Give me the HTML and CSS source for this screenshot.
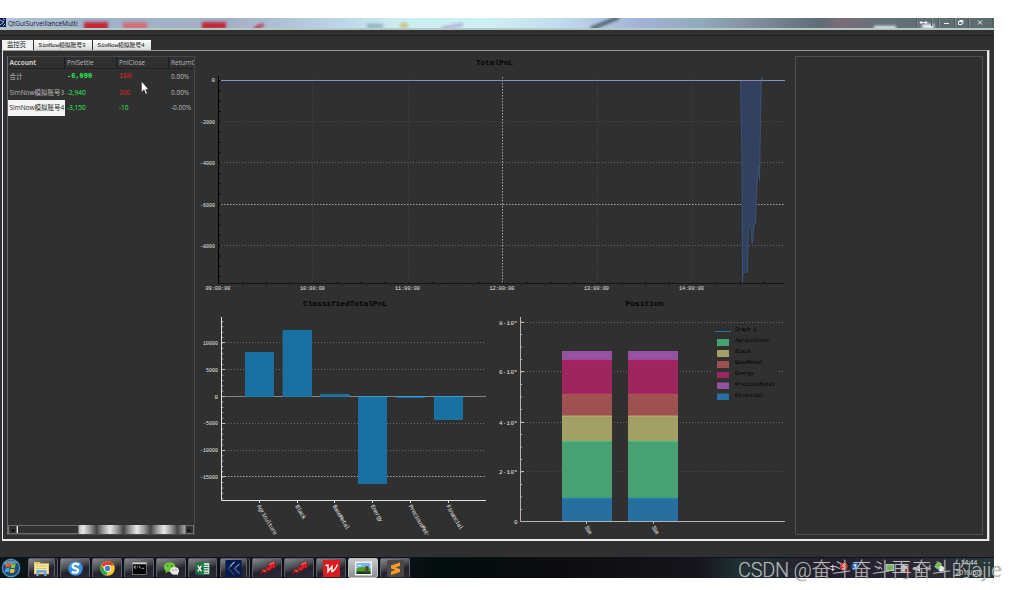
FILE: index.html
```
<!DOCTYPE html>
<html lang="zh">

<head>
  <meta charset="UTF-8" />
  <meta name="viewport" content="width=device-width, initial-scale=1.0" />
  <title>QtGuiSurveillanceMulti</title>
  <link rel="stylesheet" href="styles.css">
</head>

<body>
  <div class="desktop">
    <div class="titlebar">
      <svg class="app-icon" viewBox="0 0 6 9"><rect width="6" height="9" fill="#0b1f4d" /><path d="M0 2L4 4L0 7M3 1L5 2M3 8L5 6" stroke="#b9c7e8" stroke-width=".9" fill="none" /></svg>
      <span class="app-name">QtGuiSurveillanceMulti</span>
      <div class="glass">
        <i class="blob crimson b1"></i>
        <i class="blob crimson b2"></i>
        <i class="blob crimson b3"></i>
        <i class="blob crimson b4"></i>
        <i class="blob teal b5"></i>
        <i class="blob gold b6"></i>
        <i class="blob violet b7"></i>
        <i class="blob dark b8"></i>
        <i class="blob white b9"></i>
        <i class="blob white b10"></i>
      </div>
      <svg class="win-btns" viewBox="915 18 79 10">
        <path d="M916.5 18V26M931.5 18V26M938.5 18V27M954.5 18V27M968.5 18V27M992.5 18V27" stroke="#4b5759" />
        <path d="M917.5 18V26M932.5 18V26M939.5 18V27M955.5 18V27M969.5 18V27" stroke="#93a09f" stroke-width=".6" />
        <path d="M920 22.5H927M921.5 21L920 22.5L921.5 24M925.500 21L927 22.500L925.500 24M944 23.500H949" stroke="#f2f2f2" fill="none" />
        <path d="M958.500 21.500H962V24.500H958.500ZM959.500 20.500H963V23.500" stroke="#f2f2f2" fill="none" />
        <path d="M978 20.500L982 24.500M982 20.500L978 24.500" stroke="#f2f2f2" />
      </svg>
    </div>
    <div class="menubar"></div>

    <div class="tabs">
      <div class="tab active">监控页</div>
      <div class="tab">SimNow模拟账号3</div>
      <div class="tab">SimNow模拟账号4</div>
    </div>

    <div class="pane">
      <div class="accounts">
        <div class="row head">
          <div class="bold">Account</div>
          <div>PnlSettle</div>
          <div>PnlClose</div>
          <div>ReturnClose</div>
        </div>
        <div class="row">
          <div>合计</div>
          <div class="green mono">-6,090</div>
          <div class="red mono thin">190</div>
          <div>0.00%</div>
        </div>
        <div class="row">
          <div>SimNow模拟账号3</div>
          <div class="green">-2,940</div>
          <div class="red">200</div>
          <div>0.00%</div>
        </div>
        <div class="row">
          <div class="selected">SimNow模拟账号4</div>
          <div class="green">-3,150</div>
          <div class="green">-10</div>
          <div>-0.00%</div>
        </div>
        <div class="scrollbar">
          <span class="arrow">◂</span>
          <span class="trough"></span>
          <span class="handle"></span>
          <span class="arrow">▸</span>
        </div>
        <svg class="cursor" viewBox="0 0 8 14"><path d="M.5 .5V11L3 8.700L4.800 13L6.300 12.300L4.600 8.300H7.500Z" fill="#fff" stroke="#222" stroke-width=".4" /></svg>
      </div>

      <div class="charts">
        <!-- total pnl -->
        <svg class="total" viewBox="195 56 600 240">
          <text class="title" x="476" y="65" textLength="37">TotalPnL</text>
          <g class="grid">
            <path class="dim" d="M221 121.500H785M312.500 77V283M408.500 77V283M597.500 77V283M692.500 77V283" />
            <path class="mid" d="M221 245.500H785M221 162.500H785" />
            <path class="lit" d="M221 204.500H785M502.500 77V283" />
          </g>
          <path d="M740.500 80.500L742 160L742.500 282.500L743 273L744 272L746 273L747.500 271L748 245L748.500 226L749.500 225L751 230L752 243L753 240L753.500 225L755.500 224L756.500 195L757.500 174L758.500 166L759.500 180L760.500 120L761 97L761.500 80.500Z" fill="#33405f" />
          <path d="M740.500 80.500L742 160L742.500 282.500L743 273L744 272L746 273L747.500 271L748 245L748.500 226L749.500 225L751 230L752 243L753 240L753.500 225L755.500 224L756.500 195L757.500 174L758.500 166L759.500 180L760.500 120L761 97L761.500 77L762.500 80" fill="none" stroke="#3b5f88" stroke-width=".7" />
          <path d="M221 80.500H785" stroke="#7f97c0" />
          <path d="M741 80.500H762" stroke="#8e86ac" />
          <path d="M218.500 76V283.500" stroke="#000" />
          <path d="M219.500 80V283" stroke="#000" stroke-width="2" stroke-dasharray="1 9.320" />
          <path d="M218 283.500H785" stroke="#161616" />
          <path d="M218.500 282.500H785" stroke="#0b0b0b" stroke-width="1.500" stroke-dasharray="1 22.700" />
          <g class="tick end">
            <text x="215" y="82.300">0</text>
            <text x="215" y="123.500" textLength="15" lengthAdjust="spacingAndGlyphs">-2000</text>
            <text x="215" y="164.700" textLength="15" lengthAdjust="spacingAndGlyphs">-4000</text>
            <text x="215" y="206.500" textLength="15" lengthAdjust="spacingAndGlyphs">-6000</text>
            <text x="215" y="247.500" textLength="15" lengthAdjust="spacingAndGlyphs">-8000</text>
          </g>
          <g class="tick">
            <text x="205.500" y="290" textLength="25" lengthAdjust="spacingAndGlyphs">09:00:00</text>
            <text x="300" y="290" textLength="25" lengthAdjust="spacingAndGlyphs">10:00:00</text>
            <text x="395" y="290" textLength="25" lengthAdjust="spacingAndGlyphs">11:00:00</text>
            <text x="489.500" y="290" textLength="25" lengthAdjust="spacingAndGlyphs">12:00:00</text>
            <text x="584" y="290" textLength="25" lengthAdjust="spacingAndGlyphs">13:00:00</text>
            <text x="679" y="290" textLength="25" lengthAdjust="spacingAndGlyphs">14:00:00</text>
          </g>
        </svg>

        <!-- pnl by sector -->
        <svg class="classified" viewBox="195 296 300 239">
          <text class="title" x="303" y="306" textLength="84">ClassifiedTotalPnL</text>
          <g class="grid">
            <path class="mid" d="M225 342.500H486M225 369.500H486M225 423.500H486M225 450.500H486" />
            <path class="lit" d="M225 476.500H486" />
          </g>
          <path d="M221 396.500H486" stroke="#858585" />
          <g class="bars">
            <rect x="245.500" y="352.500" width="28" height="44" />
            <rect x="283" y="330.500" width="28.500" height="66" />
            <rect x="320.500" y="394.500" width="28.500" height="2" />
            <rect x="358.500" y="396.500" width="28" height="87" />
            <rect x="396.500" y="396.500" width="28" height="1" />
            <rect x="434.500" y="396.500" width="28" height="23" />
          </g>
          <path d="M358 396.500H387M396 396.500H425M434 396.500H463" stroke="#3b9dd4" />
          <path d="M222.500 321V500" stroke="#aaa" stroke-width="1.500" stroke-dasharray="1 4.370" />
          <path d="M221 342.500H225M221 369.500H225M221 396.500H225M221 423.500H225M221 450.500H225M221 476.500H225" stroke="#bbb" />
          <path d="M221.500 317V500.500H486M259.500 500V503M297.500 500V503M334.500 500V503M372.500 500V503M410.500 500V503M448.500 500V503" fill="none" stroke="#e2e2e2" />
          <g class="tick end">
            <text x="218" y="344.500" textLength="15" lengthAdjust="spacingAndGlyphs">10000</text>
            <text x="218" y="371.500" textLength="12" lengthAdjust="spacingAndGlyphs">5000</text>
            <text x="218" y="398.500">0</text>
            <text x="218" y="425" textLength="15" lengthAdjust="spacingAndGlyphs">-5000</text>
            <text x="218" y="452" textLength="18" lengthAdjust="spacingAndGlyphs">-10000</text>
            <text x="218" y="478.500" textLength="18" lengthAdjust="spacingAndGlyphs">-15000</text>
          </g>
          <g class="tick">
            <text transform="translate(257 506) rotate(60)" textLength="34">Agriculture</text>
            <text transform="translate(295 506) rotate(60)" textLength="16">Black</text>
            <text transform="translate(332.500 506) rotate(60)" textLength="28">BaseMetal</text>
            <text transform="translate(370.500 506) rotate(60)" textLength="19">Energy</text>
            <text transform="translate(408.500 506) rotate(60)" textLength="40">PreciousMetal</text>
            <text transform="translate(446 506) rotate(60)" textLength="28">Financial</text>
          </g>
        </svg>

        <!-- position value -->
        <svg class="position" viewBox="495 296 300 239">
          <text class="title" x="625.500" y="306" textLength="38">Position</text>
          <g class="grid">
            <path class="dim" d="M524 471.500H785" />
            <path class="mid" d="M524 322.500H785M524 371.500H711M779 371.500H785M524 422.500H785" />
          </g>
          <g class="stack">
            <path d="M562 351H612V360H562ZM628 351H678V360H628Z" fill="#9353a0" />
            <path d="M562 360H612V394H562ZM628 360H678V394H628Z" fill="#9e265c" />
            <path d="M562 394H612V416H562ZM628 394H678V416H628Z" fill="#9f5152" />
            <path d="M562 416H612V441H562ZM628 416H678V441H628Z" fill="#a3a065" />
            <path d="M562 441H612V498H562ZM628 441H678V498H628Z" fill="#48a173" />
            <path d="M562 498H612V521H562ZM628 498H678V521H628Z" fill="#266f9f" />
          </g>
          <g stroke-width=".8">
            <path d="M562 360.300H612M628 360.300H678" stroke="#c01a72" />
            <path d="M562 394.300H612M628 394.300H678" stroke="#b2545a" />
            <path d="M562 416H612M628 416H678" stroke="#bdb872" />
            <path d="M562 441.300H612M628 441.300H678" stroke="#4fc487" />
            <path d="M562 498.300H612M628 498.300H678" stroke="#2b89b8" />
          </g>
          <path d="M521.500 321.500V520" stroke="#aaa" stroke-width="1.500" stroke-dasharray="1 11.500" />
          <path d="M520 322.500H524M520 371.500H524M520 422.500H524M520 471.500H524" stroke="#bbb" />
          <path d="M520.500 317V521.500H785M586.500 521V524M653.500 521V524" fill="none" stroke="#b4b4b4" />
          <g class="tick">
            <text x="499" y="324.500" textLength="15">8·10</text>
            <text x="499" y="373.700" textLength="15">6·10</text>
            <text x="499" y="424.500" textLength="15">4·10</text>
            <text x="499" y="473.800" textLength="15">2·10</text>
            <text class="sup" x="514.500" y="322.500">6</text>
            <text class="sup" x="514.500" y="371.700">6</text>
            <text class="sup" x="514.500" y="422.500">6</text>
            <text class="sup" x="514.500" y="471.800">6</text>
            <text x="514" y="523.500">0</text>
            <text transform="translate(584.500 527) rotate(60)" textLength="9">Sim</text>
            <text transform="translate(651.500 527) rotate(60)" textLength="9">Sim</text>
          </g>
          <path d="M714.500 331.500H731" stroke="#266f9f" />
          <rect x="717" y="339" width="12" height="7" fill="#48a173" />
          <rect x="717" y="350" width="12" height="7" fill="#a3a065" />
          <rect x="717" y="361" width="12" height="7" fill="#9f5152" />
          <rect x="717" y="372" width="12" height="6" fill="#9e265c" />
          <rect x="717" y="382.500" width="12" height="6.500" fill="#9353a0" />
          <rect x="717" y="393.500" width="12" height="6.500" fill="#266f9f" />
          <g class="legend">
            <text x="735" y="331" textLength="22">Graph 1</text>
            <text x="735" y="342" textLength="34">Agriculture</text>
            <text x="735" y="353" textLength="16">Black</text>
            <text x="735" y="364" textLength="28">BaseMetal</text>
            <text x="735" y="375" textLength="19">Energy</text>
            <text x="735" y="386" textLength="40">PreciousMetal</text>
            <text x="735" y="397" textLength="28">Financial</text>
          </g>
        </svg>
      </div>

      <div class="side"></div>
    </div>

    <div class="taskbar">
      <svg class="orb" viewBox="0 0 22 21">
        <circle cx="11" cy="10.500" r="10" fill="#1c4d78" />
        <circle cx="11" cy="10.500" r="9" fill="none" stroke="#5c93b5" stroke-width="1.200" />
        <path d="M4 5Q11 0 18 5Q11 8 4 8Z" fill="#9fbfd0" opacity=".6" />
        <path d="M6 6.500Q8 5 10.500 6L9.800 10Q7.500 9 5.300 10.300Z" fill="#e8582c" />
        <path d="M11.300 6.300Q13.500 7.300 16 6L15.200 10Q13 11 10.600 10.200Z" fill="#8dc63f" />
        <path d="M5.200 11.200Q7.400 10 9.600 11L9 15Q6.800 14 4.500 15.300Z" fill="#4aa8e0" />
        <path d="M10.500 11.300Q12.700 12.200 15 11L14.300 15Q12 16.200 9.800 15.300Z" fill="#fdc52f" />
      </svg>
      <div class="task multi">
        <svg viewBox="0 0 18 16"><path d="M1 1H7L8 2.500H17V14H1Z" fill="#e9c766" /><path d="M2 3.500H16V13H2Z" fill="#f9e9a8" /><path d="M3 5.500H15M3 8H15" stroke="#d9b552" stroke-width=".8" /><path d="M3.500 9.500H14.500V16H12V12.500H6V16H3.500Z" fill="#68a9d8" /></svg>
      </div>
      <div class="task wide">
        <svg viewBox="0 0 16 16"><circle cx="8" cy="8" r="7.800" fill="#3c8ee0" /><path d="M12 4Q5.500 1.500 5 5.200Q5 7 8 7.800Q11.500 8.800 10.500 11Q9 13.500 4 11.500" fill="none" stroke="#fff" stroke-width="2.600" /></svg>
      </div>
      <div class="task wide">
        <svg viewBox="0 0 16 16"><circle cx="8" cy="8" r="7.800" fill="#f9c927" /><path d="M8 8L1.200 4.200A7.800 7.800 0 0 1 14.900 4.500H8Z" fill="#e0402f" /><path d="M1.200 4.200L4.900 9.800L8 11.500L6.500 15.700A7.800 7.800 0 0 1 1.200 4.200Z" fill="#35a352" /><circle cx="8" cy="8" r="3.700" fill="#fff" /><circle cx="8" cy="8" r="2.900" fill="#3b7de0" /></svg>
      </div>
      <div class="task wide">
        <svg viewBox="0 0 16 16"><rect x=".5" y="2" width="15" height="12.500" fill="#050505" stroke="#999" stroke-width=".7" /><rect x=".5" y="1.500" width="15" height="2" fill="#c9c9c9" /><path d="M4.500 5.500H2.500V7.500H4.500M6 5.500V6M6 7V7.500M7.500 5L9 8M10.500 7.800H13" fill="none" stroke="#ddd" stroke-width=".8" /></svg>
      </div>
      <div class="task wide">
        <svg viewBox="0 0 17 16"><ellipse cx="6.500" cy="6.500" rx="6.200" ry="5.300" fill="#6fc83b" /><path d="M2.500 10L2 13L5 11.500Z" fill="#6fc83b" /><circle cx="4.500" cy="5" r=".8" fill="#28591c" /><circle cx="8.500" cy="5" r=".8" fill="#28591c" /><ellipse cx="11.800" cy="10.500" rx="4.800" ry="4.200" fill="#e8e8e8" /><path d="M13 13.500L15.500 15.500L15 12.500Z" fill="#e8e8e8" /><circle cx="10.200" cy="9.500" r=".6" fill="#555" /><circle cx="13.300" cy="9.500" r=".6" fill="#555" /></svg>
      </div>
      <div class="task excel">
        <svg viewBox="0 0 16 16"><rect x="8" y="2" width="7.500" height="12" fill="#fff" stroke="#237447" stroke-width=".8" /><path d="M9.500 4.500H14.500M9.500 7H14.500M9.500 9.500H14.500M9.500 12H14.500" stroke="#237447" stroke-width="1.200" /><path d="M.5 2L9.500 .5V15.500L.5 14Z" fill="#207245" /><path d="M3 5L7 11M7 5L3 11" stroke="#fff" stroke-width="1.300" /></svg>
      </div>
      <div class="task multi">
        <svg class="big" viewBox="0 0 17 18"><rect width="17" height="18" fill="#061a4d" /><path d="M9.500 2L3 9L9.500 16" fill="none" stroke="#33486f" stroke-width="1.300" /><path d="M15 4L9.500 9L15 14.500" fill="none" stroke="#4d628c" stroke-width="1.600" /><path d="M5 6.800L9.500 2" stroke="#aab6cf" stroke-width="1.200" /><path d="M11 7.500L14 5" stroke="#7f8eab" /></svg>
      </div>
      <div class="task wide">
        <svg viewBox="0 0 18 16"><path d="M.5 15L4 8.500L6.500 10L8.500 5.500L10.500 6.500L9.500 3L17.500 .5L17 8.500L14 7L11.500 11L9 9.800L7 13L5 11.500Z" fill="#d41f24" stroke="#701215" stroke-width=".5" /><path d="M11 3.700L16.500 1.500M4.500 9.500L6.500 11" stroke="#f3989a" /></svg>
      </div>
      <div class="task wide">
        <svg viewBox="0 0 18 16"><path d="M.5 15L4 8.500L6.500 10L8.500 5.500L10.500 6.500L9.500 3L17.500 .5L17 8.500L14 7L11.500 11L9 9.800L7 13L5 11.500Z" fill="#d41f24" stroke="#701215" stroke-width=".5" /><path d="M11 3.700L16.500 1.500M4.500 9.500L6.500 11" stroke="#f3989a" /></svg>
      </div>
      <div class="task wide">
        <svg class="big" viewBox="0 0 17 17"><rect width="17" height="17" fill="#dc1c1c" /><path d="M2.500 5.500L5 5V11.500L9 6.500V11.500Q12 10.500 14.500 4.500" fill="none" stroke="#fff" stroke-width="1.400" /></svg>
      </div>
      <div class="task wide light">
        <svg viewBox="0 0 17 14"><rect width="17" height="14" fill="#f1f1ee" /><rect x="1.500" y="1.500" width="14" height="11" fill="#79b8e8" /><path d="M1.500 7Q8 4 15.500 7V12.500H1.500Z" fill="#4e9c2e" /><path d="M1.500 10H15.500V12.500H1.500Z" fill="#1c3b16" /><path d="M10.500 4.500H13.500V11H10.500Z" fill="#4d4a35" /><path d="M3 4H6" stroke="#fff" /></svg>
      </div>
      <div class="task wide">
        <svg class="big" viewBox="0 0 17 17"><rect width="17" height="17" rx="2" fill="#484848" /><path d="M4 5.500L13 2.500V6L8.500 7.500L13 9V12L4 15V11.500L8.500 10L4 8.500Z" fill="#f5992b" /></svg>
      </div>
      <div class="tray">
        <svg viewBox="820 557 130 21">
          <path d="M823 566H829M824 569H828M826 564V571M873 569L875.500 566L878 569" stroke="#ddd" fill="none" />
          <circle cx="837.500" cy="566" r="4" fill="#dc3529" />
          <path d="M839.500 564Q835.500 563.500 836.500 565.500Q840.500 566.500 838.500 568.500H835.500" stroke="#fff" fill="none" />
          <circle cx="849.500" cy="566" r="4" fill="#1c65b5" />
          <path d="M847.500 564.500H851M849.500 563.500V568.500" stroke="#fff" />
          <rect x="882" y="564" width="8" height="6" fill="#6eb45e" stroke="#ddd" />
          <path d="M898 564V571H904V566ZM911 567H914L917 564V571L914 569H911ZM924 570V568M926 570V566M928 570V564" fill="#ccc" stroke="#ddd" />
          <circle cx="904" cy="570" r="2.300" fill="#cf2828" />
          <circle cx="937" cy="565.500" r="3.500" fill="#6fc83b" />
          <circle cx="940" cy="568.500" r="3" fill="#e8e8e8" />
        </svg>
        <div class="clock">14:44<br>2018/5/3</div>
      </div>
    </div>
  </div>
  <div class="watermark"><span class="latin">CSDN @</span>奋斗奋斗再奋斗的ajie</div>
</body>

</html>
```
FILE: styles.css
```
* {
  box-sizing: border-box;
}

body {
  margin: 0;
  padding-top: 18px;
  height: 590px;
  background-color: #fff;
  overflow: hidden;
  position: relative;
  font-family: "Open Sans", "Noto Sans CJK SC", sans-serif;
}

svg {
  display: block;
}

.desktop {
  width: 994px;
  height: 560px;
  background-color: #303030;
  display: flex;
  flex-direction: column;
}

/* title bar */
.titlebar {
  height: 12px;
  flex: none;
  display: flex;
  position: relative;
  overflow: hidden;
  border-bottom: 2px solid #b7c5c3;
  background: linear-gradient(90deg, #b5c4da 0, #9fb3c9 80px, #a3b0c3 230px, #bcd6ea 340px, #cbeef0 400px, #cdf0f2 490px, #c0dcf0 560px, #a4b2d4 640px, #8fabbd 700px, #8796a6 740px, #5f6c79 820px, #7b6d76 840px, #647178 880px, #5c6b6c 994px);
}

.app-icon {
  width: 6px;
  height: 9px;
}

.app-name {
  margin-left: 2px;
  font-size: 6.5px;
  line-height: 11px;
  color: #15202c;
  z-index: 1;
}

.glass {
  position: absolute;
  inset: 0;
}

.blob {
  position: absolute;
  filter: blur(1.5px);
}

.crimson {
  background-color: #c0283a;
}

.teal {
  background-color: #8ab0ba;
}

.gold {
  background-color: #cfc284;
}

.violet {
  background-color: #a9a4dc;
}

.dark {
  background-color: #4f6372;
}

.white {
  background-color: #e9f4f4;
}

.b1 {
  left: 84px;
  top: 4px;
  width: 24px;
  height: 8px;
}

.b2 {
  left: 123px;
  top: 4px;
  width: 24px;
  height: 8px;
  background-color: #d0707f;
}

.b3 {
  left: 202px;
  top: 4px;
  width: 24px;
  height: 7px;
}

.b4 {
  left: 254px;
  top: 7px;
  width: 10px;
  height: 3px;
  transform: rotate(-25deg);
}

.b5 {
  left: 367px;
  top: 6px;
  width: 16px;
  height: 4px;
}

.b6 {
  left: 400px;
  top: 5px;
  width: 8px;
  height: 5px;
}

.b7 {
  left: 441px;
  top: 7px;
  width: 22px;
  height: 3px;
  transform: rotate(-12deg);
}

.b8 {
  left: 590px;
  top: 3px;
  width: 30px;
  height: 4px;
  transform: rotate(-22deg);
}

.b9 {
  left: 874px;
  top: 8px;
  width: 22px;
  height: 4px;
}

.b10 {
  left: 922px;
  top: 6px;
  width: 12px;
  height: 5px;
}

.win-btns {
  width: 79px;
  height: 10px;
  margin-left: auto;
  z-index: 1;
}

.menubar {
  height: 6px;
  flex: none;
  border-bottom: 1px solid #202020;
}

/* tabs */
.tabs {
  display: flex;
  gap: 1px;
  padding: 4px 0 0 2px;
  height: 14px;
  flex: none;
}

.tab {
  width: 58px;
  height: 10px;
  font: 6px/11px "Liberation Mono", "Noto Sans CJK SC", monospace;
  letter-spacing: -0.2px;
  padding-left: 4.5px;
  white-space: nowrap;
  overflow: hidden;
  color: #222;
  background: linear-gradient(#fdfdfd, #d8d8d8);
}

.tab.active {
  width: 31px;
  padding-left: 5px;
  font-size: 6.5px;
  background: #f2f2f2;
}

.pane {
  width: 987px;
  height: 491px;
  flex: none;
  margin-left: 2px;
  padding: 5px 4px 4px 4px;
  display: flex;
  border: solid #eceaf0;
  border-width: 1px 2px 2px 1px;
  border-top-color: #9c98a8;
  box-shadow: 1px 0 #777;
}

/* account table */
.accounts {
  width: 188px;
  display: flex;
  flex-direction: column;
  position: relative;
  border: 1px solid #484848;
  border-left-color: #6b6875;
}

.row {
  display: grid;
  grid-template-columns: 57px 52px 52px 1fr;
  height: 15.5px;
  line-height: 15.5px;
  font-size: 6.5px;
  color: #b9b9b9;
}

.row div {
  padding-left: 2px;
  white-space: nowrap;
  overflow: hidden;
}

.row div:first-child {
  padding-left: 1.5px;
}

.row.head {
  height: 12px;
  line-height: 12px;
  border-bottom: 1px solid #222;
}

.head div {
  border-right: 1px solid #1e1e1e;
}

.head div:last-child {
  border-right: none;
}

.row .selected {
  background-color: #f4f4f4;
  color: #222;
}

.bold {
  font-weight: bold;
  color: #ccc;
}

.row .green {
  color: #2cf25a;
}

.row .red {
  color: #e02424;
}

.row .mono {
  font-family: "Liberation Mono", monospace;
  font-size: 7px;
  font-weight: bold;
}

.row .thin {
  font-weight: normal;
}

.scrollbar {
  margin-top: auto;
  height: 9px;
  display: flex;
  border: 1px solid #6a6a6a;
  border-width: 1px 0;
}

.arrow {
  width: 9px;
  font: 6px/7px "DejaVu Sans", sans-serif;
  text-align: center;
  color: #000;
  border: 1px solid #777;
  border-width: 0 1px;
}

.trough {
  width: 62px;
  border-left: 1px solid #eee;
  border-right: 1px solid #777;
}

.handle {
  flex: 1;
  margin: -1px 0;
  background: repeating-linear-gradient(90deg, #e8e8e8 4px, #9a9a9a 11px, #444 17.5px, #9a9a9a 24px, #e8e8e8 31px);
}

.cursor {
  position: absolute;
  left: 133px;
  top: 24px;
  width: 8px;
  height: 14px;
}

/* charts */
.charts {
  width: 600px;
  display: grid;
  grid-template-columns: 300px 300px;
  grid-template-rows: 240px 239px;
}

.charts svg {
  width: 300px;
  height: 239px;
}

.charts .total {
  grid-column: 1 / 3;
  width: 600px;
  height: 240px;
}

.title {
  font: bold 8px "Liberation Mono", monospace;
  fill: #050505;
}

.tick {
  font: 6px "Liberation Mono", monospace;
  fill: #e6e6e6;
}

.tick.end {
  text-anchor: end;
}

.sup {
  font-size: 4px;
}

.legend {
  font: 5.8px "Liberation Mono", monospace;
  fill: #050505;
}

.grid path {
  fill: none;
  stroke-dasharray: 1 2;
}

.dim {
  stroke: #484848;
}

.mid {
  stroke: #6c6c6c;
}

.grid .lit {
  stroke: #a5a5a5;
  stroke-dasharray: 1.5 1.5;
}

.bars {
  fill: #1a70a0;
  stroke: #1878b0;
  stroke-width: 0.8;
}

.side {
  width: 188px;
  border: 1px solid #4e4e54;
}

/* taskbar */
.taskbar {
  height: 21px;
  margin-top: auto;
  display: flex;
  align-items: flex-end;
  gap: 2px;
  border-top: 1px solid #10131a;
  background: linear-gradient(90deg, #0c1418 0, #0a1013 410px, #020d0d 440px, #0c0c0e 560px, #17151c 700px, #203236 740px, #241f2e 830px, #2b2735 920px, #263a38 994px);
}

.orb {
  width: 22px;
  height: 20px;
}

.task {
  width: 30px;
  height: 20px;
  display: flex;
  align-items: center;
  justify-content: center;
  border: 1px solid #5c5f66;
  border-bottom-color: #25262d;
  border-radius: 2px;
  background: linear-gradient(165deg, #85888b 0, #4b4d52 40%, #23222c 60%, #2b2938 100%);
}

.task svg {
  width: 17px;
  height: 15px;
}

.task svg.big {
  height: 17px;
}

.task.multi {
  width: 27px;
  box-shadow: 2px 0 #1a1e22, 3px 0 #5c5f66;
  margin-right: 3px;
}

.orb + .task {
  margin-left: 4px;
}

.task.excel {
  width: 29px;
  margin-right: 1px;
}

.task.light {
  background: linear-gradient(#c8cacb, #8a8c90);
  border-color: #b8babd;
}

.tray {
  margin-left: auto;
  display: flex;
  height: 20px;
}

.tray svg {
  width: 130px;
  height: 20px;
}

.clock {
  width: 40px;
  padding-right: 10px;
  font-size: 6.5px;
  line-height: 10px;
  text-align: center;
  color: #eee;
  white-space: nowrap;
}

.watermark {
  position: absolute;
  left: 738px;
  top: 556px;
  font: 20px/28px Roboto, "Noto Sans CJK SC", sans-serif;
  font-weight: 300;
  color: rgba(200, 200, 200, 0.85);
  text-shadow: 0 0 1px #666;
  white-space: nowrap;
}

.latin {
  letter-spacing: -0.3px;
}
```
